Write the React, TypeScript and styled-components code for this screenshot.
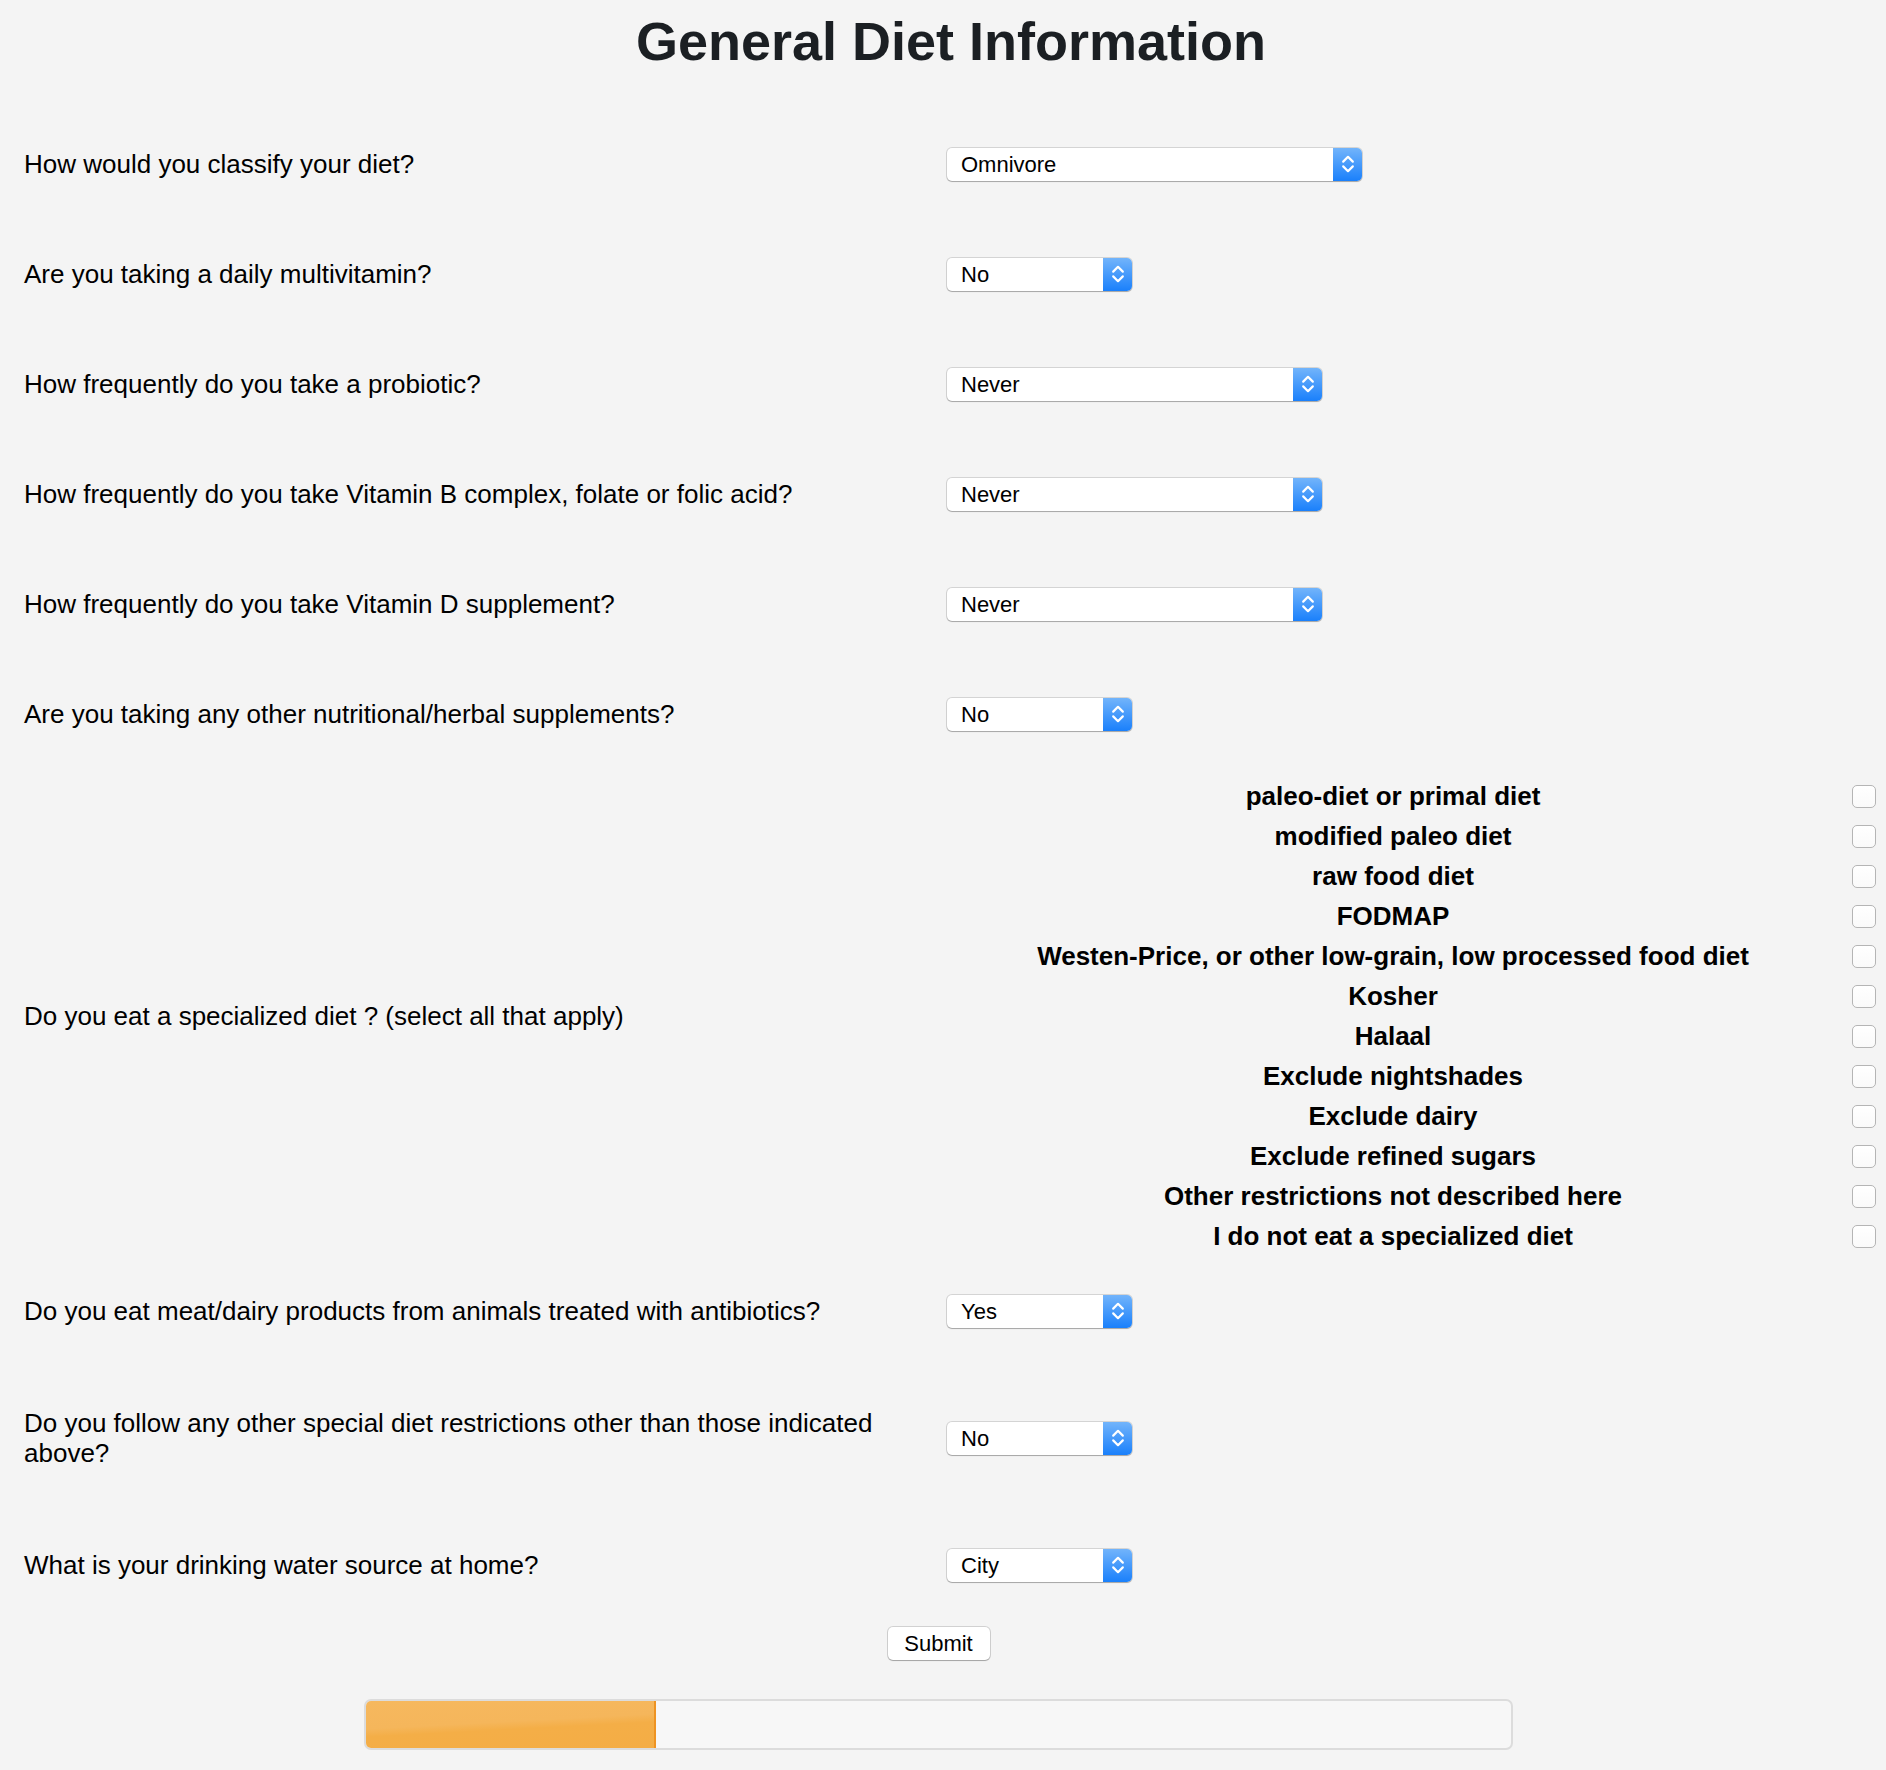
import React from "react";
import styled, { createGlobalStyle } from "styled-components";

const GlobalStyle = createGlobalStyle`
  html, body { margin: 0; padding: 0; background: #f4f4f4; }
  body { font-family: "Liberation Sans", Arial, Helvetica, sans-serif; color: #000; }
`;

const Page = styled.div`
  width: 1886px;
  min-height: 1770px;
  box-sizing: border-box;
  padding-top: 10px;
`;

const Title = styled.h1`
  margin: 0 0 36px;
  padding-left: 16px;
  text-align: center;
  font-size: 54px;
  line-height: 63px;
  font-weight: 700;
  color: #1b1f23;
`;

const Row = styled.div<{ $height?: number; $padTop?: number }>`
  display: grid;
  grid-template-columns: 947px 1fr;
  align-items: center;
  box-sizing: border-box;
  height: ${(p) => (p.$height ? `${p.$height}px` : "auto")};
  padding-top: ${(p) => p.$padTop ?? 0}px;
`;

const Question = styled.div`
  padding: 0 40px 0 24px;
  font-size: 26px;
  line-height: 30px;
`;

const SelectBox = styled.div<{ $width: number }>`
  display: flex;
  width: ${(p) => p.$width}px;
  height: 33px;
  box-sizing: border-box;
  background: #fff;
  border-radius: 5px;
  box-shadow: 0 0 0 1px rgba(0, 0, 0, 0.13), 0 1px 1px rgba(0, 0, 0, 0.22);
  overflow: hidden;
`;

const NativeSelect = styled.select`
  appearance: none;
  -webkit-appearance: none;
  flex: 1;
  min-width: 0;
  border: 0;
  background: transparent;
  font-family: inherit;
  font-size: 22px;
  padding: 0 0 0 14px;
  color: #000;
  outline: none;
`;

const ArrowBox = styled.div`
  width: 29px;
  flex: none;
  display: flex;
  align-items: center;
  justify-content: center;
  background: linear-gradient(#72b4fb, #1a80fb);
`;

const OptionList = styled.div`
  display: flex;
  flex-direction: column;
`;

const OptionRow = styled.label`
  display: grid;
  grid-template-columns: 1fr 47px;
  align-items: center;
  height: 40px;
`;

const OptionText = styled.span`
  text-align: center;
  font-weight: 700;
  font-size: 26px;
`;

const Check = styled.input`
  appearance: none;
  -webkit-appearance: none;
  margin: 0 0 0 13px;
  width: 24px;
  height: 23px;
  box-sizing: border-box;
  border: 1.5px solid #b5b5b5;
  border-radius: 5px;
  background: linear-gradient(#ffffff, #fafafa);
`;

const Footer = styled.div`
  display: flex;
  flex-direction: column;
  align-items: center;
  padding: 7px 9px 0 0;
  gap: 39px;
`;

const SubmitButton = styled.button`
  width: 102px;
  height: 33px;
  background: #fff;
  border: 0;
  border-radius: 5px;
  box-shadow: 0 0 0 1px rgba(0, 0, 0, 0.14), 0 1px 1px rgba(0, 0, 0, 0.22);
  font-family: inherit;
  font-size: 22px;
  color: #000;
  padding: 0;
`;

const Progress = styled.div`
  width: 1149px;
  height: 51px;
  box-sizing: border-box;
  border: 2px solid #dcdcdc;
  border-radius: 7px;
  background: #f7f7f7;
  overflow: hidden;
`;

const ProgressFill = styled.div<{ $value: number }>`
  width: ${(p) => p.$value}%;
  height: 100%;
  box-sizing: border-box;
  border-right: 2px solid #ee9322;
  background: linear-gradient(177deg, #f6b85e 0%, #f5b65b 45%, #f4ae47 58%, #f4ad45 100%);
`;

const Chevrons = () => (
  <svg width="14" height="22" viewBox="0 0 14 22" fill="none" stroke="#fff" strokeWidth="2.2" strokeLinecap="round" strokeLinejoin="round">
    <path d="M2.2 8.6 L7 3.8 L11.8 8.6" />
    <path d="M2.2 13.4 L7 18.2 L11.8 13.4" />
  </svg>
);

type SelectProps = { value: string; options: string[]; width: number };

const Select = ({ value, options, width }: SelectProps) => (
  <SelectBox $width={width}>
    <NativeSelect defaultValue={value}>
      {options.map((o) => (
        <option key={o}>{o}</option>
      ))}
    </NativeSelect>
    <ArrowBox>
      <Chevrons />
    </ArrowBox>
  </SelectBox>
);

const freq = ["Never", "Rarely", "Occasionally", "Regularly", "Daily"];
const yesNo = ["No", "Yes"];

const topRows = [
  { q: "How would you classify your diet?", v: "Omnivore", o: ["Omnivore", "Vegetarian", "Vegan"], w: 415 },
  { q: "Are you taking a daily multivitamin?", v: "No", o: yesNo, w: 185 },
  { q: "How frequently do you take a probiotic?", v: "Never", o: freq, w: 375 },
  { q: "How frequently do you take Vitamin B complex, folate or folic acid?", v: "Never", o: freq, w: 375 },
  { q: "How frequently do you take Vitamin D supplement?", v: "Never", o: freq, w: 375 },
  { q: "Are you taking any other nutritional/herbal supplements?", v: "No", o: yesNo, w: 185 },
];

const diets = [
  "paleo-diet or primal diet",
  "modified paleo diet",
  "raw food diet",
  "FODMAP",
  "Westen-Price, or other low-grain, low processed food diet",
  "Kosher",
  "Halaal",
  "Exclude nightshades",
  "Exclude dairy",
  "Exclude refined sugars",
  "Other restrictions not described here",
  "I do not eat a specialized diet",
];

export default function App() {
  return (
    <>
      <GlobalStyle />
      <Page>
        <Title>General Diet Information</Title>
        {topRows.map((r) => (
          <Row key={r.q} $height={110}>
            <Question>{r.q}</Question>
            <Select value={r.v} options={r.o} width={r.w} />
          </Row>
        ))}
        <Row $padTop={7}>
          <Question>Do you eat a specialized diet ? (select all that apply)</Question>
          <OptionList>
            {diets.map((d) => (
              <OptionRow key={d}>
                <OptionText>{d}</OptionText>
                <Check type="checkbox" />
              </OptionRow>
            ))}
          </OptionList>
        </Row>
        <Row $height={110}>
          <Question>Do you eat meat/dairy products from animals treated with antibiotics?</Question>
          <Select value="Yes" options={["Yes", "No"]} width={185} />
        </Row>
        <Row $height={144}>
          <Question>Do you follow any other special diet restrictions other than those indicated above?</Question>
          <Select value="No" options={yesNo} width={185} />
        </Row>
        <Row $height={110}>
          <Question>What is your drinking water source at home?</Question>
          <Select value="City" options={["City", "Well", "Bottled", "Filtered"]} width={185} />
        </Row>
        <Footer>
          <SubmitButton type="button">Submit</SubmitButton>
          <Progress>
            <ProgressFill $value={25.3} />
          </Progress>
        </Footer>
      </Page>
    </>
  );
}
